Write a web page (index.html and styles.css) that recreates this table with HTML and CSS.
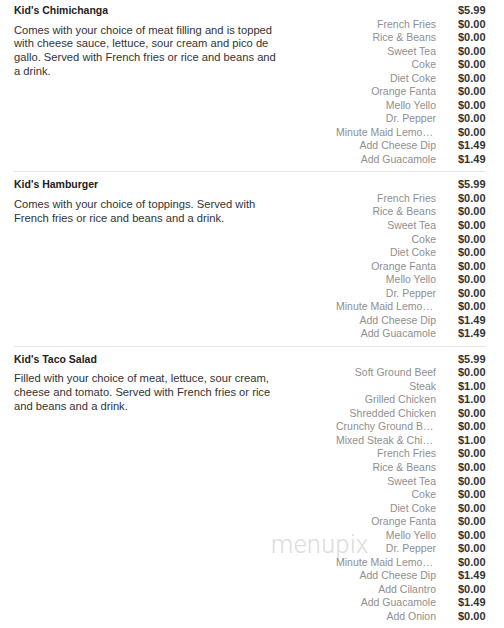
FILE: index.html
```html
<!DOCTYPE html>
<html>
<head>
<meta charset="utf-8">
<link rel="stylesheet" href="styles.css">
</head>
<body>
<div class="menu">
  <div class="watermark">menupix</div>
  <section class="item">
    <div class="info">
      <div class="title">Kid's Chimichanga</div>
      <div class="desc">Comes with your choice of meat filling and is topped with cheese sauce, lettuce, sour cream and pico de gallo. Served with French fries or rice and beans and a drink.</div>
    </div>
    <div class="prices">
      <span class="opt"></span><span class="price">$5.99</span>
      <span class="opt">French Fries</span><span class="price">$0.00</span>
      <span class="opt">Rice &amp; Beans</span><span class="price">$0.00</span>
      <span class="opt">Sweet Tea</span><span class="price">$0.00</span>
      <span class="opt">Coke</span><span class="price">$0.00</span>
      <span class="opt">Diet Coke</span><span class="price">$0.00</span>
      <span class="opt">Orange Fanta</span><span class="price">$0.00</span>
      <span class="opt">Mello Yello</span><span class="price">$0.00</span>
      <span class="opt">Dr. Pepper</span><span class="price">$0.00</span>
      <span class="opt">Minute Maid Lemonade</span><span class="price">$0.00</span>
      <span class="opt">Add Cheese Dip</span><span class="price">$1.49</span>
      <span class="opt">Add Guacamole</span><span class="price">$1.49</span>
    </div>
  </section>
  <section class="item">
    <div class="info">
      <div class="title">Kid's Hamburger</div>
      <div class="desc">Comes with your choice of toppings. Served with French fries or rice and beans and a drink.</div>
    </div>
    <div class="prices">
      <span class="opt"></span><span class="price">$5.99</span>
      <span class="opt">French Fries</span><span class="price">$0.00</span>
      <span class="opt">Rice &amp; Beans</span><span class="price">$0.00</span>
      <span class="opt">Sweet Tea</span><span class="price">$0.00</span>
      <span class="opt">Coke</span><span class="price">$0.00</span>
      <span class="opt">Diet Coke</span><span class="price">$0.00</span>
      <span class="opt">Orange Fanta</span><span class="price">$0.00</span>
      <span class="opt">Mello Yello</span><span class="price">$0.00</span>
      <span class="opt">Dr. Pepper</span><span class="price">$0.00</span>
      <span class="opt">Minute Maid Lemonade</span><span class="price">$0.00</span>
      <span class="opt">Add Cheese Dip</span><span class="price">$1.49</span>
      <span class="opt">Add Guacamole</span><span class="price">$1.49</span>
    </div>
  </section>
  <section class="item">
    <div class="info">
      <div class="title">Kid's Taco Salad</div>
      <div class="desc">Filled with your choice of meat, lettuce, sour cream, cheese and tomato. Served with French fries or rice and beans and a drink.</div>
    </div>
    <div class="prices">
      <span class="opt"></span><span class="price">$5.99</span>
      <span class="opt">Soft Ground Beef</span><span class="price">$0.00</span>
      <span class="opt">Steak</span><span class="price">$1.00</span>
      <span class="opt">Grilled Chicken</span><span class="price">$1.00</span>
      <span class="opt">Shredded Chicken</span><span class="price">$0.00</span>
      <span class="opt">Crunchy Ground Beef</span><span class="price">$0.00</span>
      <span class="opt">Mixed Steak &amp; Chicken</span><span class="price">$1.00</span>
      <span class="opt">French Fries</span><span class="price">$0.00</span>
      <span class="opt">Rice &amp; Beans</span><span class="price">$0.00</span>
      <span class="opt">Sweet Tea</span><span class="price">$0.00</span>
      <span class="opt">Coke</span><span class="price">$0.00</span>
      <span class="opt">Diet Coke</span><span class="price">$0.00</span>
      <span class="opt">Orange Fanta</span><span class="price">$0.00</span>
      <span class="opt">Mello Yello</span><span class="price">$0.00</span>
      <span class="opt">Dr. Pepper</span><span class="price">$0.00</span>
      <span class="opt">Minute Maid Lemonade</span><span class="price">$0.00</span>
      <span class="opt">Add Cheese Dip</span><span class="price">$1.49</span>
      <span class="opt">Add Cilantro</span><span class="price">$0.00</span>
      <span class="opt">Add Guacamole</span><span class="price">$1.49</span>
      <span class="opt">Add Onion</span><span class="price">$0.00</span>
    </div>
  </section>
</div>
</body>
</html>
```
FILE: styles.css
```css
html, body {
  margin: 0;
  padding: 0;
  background: #ffffff;
}
body {
  font-family: "Liberation Sans", Arial, sans-serif;
  font-size: 11px;
  color: #333333;
}
.menu {
  position: relative;
  padding: 0 18px 0 14px;
}
.item {
  display: flex;
  justify-content: space-between;
  padding: 6px 0 5px;
  border-bottom: 1px solid #e6e6e6;
}
.item:first-of-type {
  padding-top: 4px;
}
.item:last-of-type {
  border-bottom: none;
}
.info {
  width: 266px;
}
.title {
  font-weight: bold;
  font-size: 10.5px;
  line-height: 13.5px;
  color: #222222;
}
.desc {
  margin-top: 6px;
  font-size: 11.2px;
  line-height: 13.7px;
  color: #333333;
}
.prices {
  display: grid;
  grid-template-columns: 100px 28px;
  column-gap: 22px;
  line-height: 13.53px;
}
.opt {
  text-align: right;
  font-size: 10.5px;
  color: #8f8f8f;
  white-space: nowrap;
  overflow: hidden;
  text-overflow: ellipsis;
}
.price {
  font-weight: bold;
  color: #333333;
  white-space: nowrap;
}
.watermark {
  position: absolute;
  left: 271px;
  top: 530px;
  font-family: Roboto, "DejaVu Sans", sans-serif;
  font-weight: 300;
  font-size: 25px;
  letter-spacing: 0.5px;
  color: #dcdcdc;
  pointer-events: none;
}
```
